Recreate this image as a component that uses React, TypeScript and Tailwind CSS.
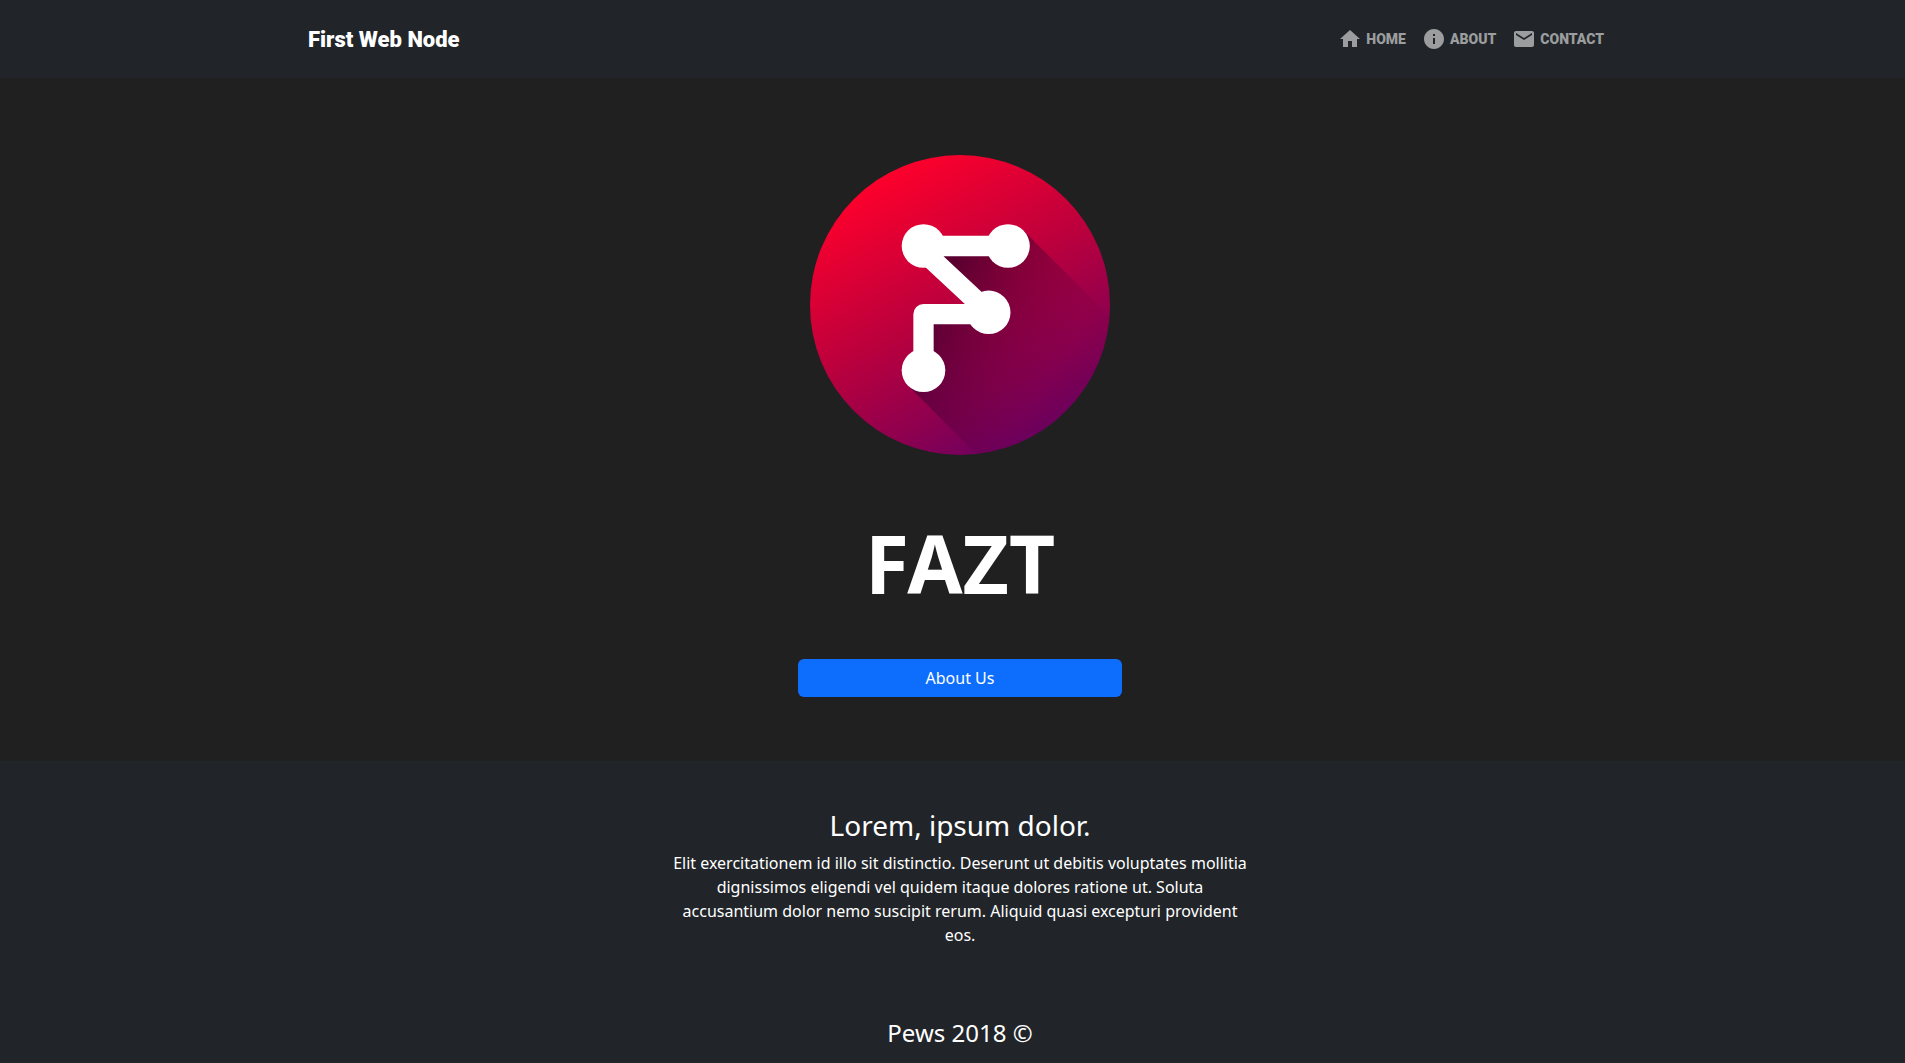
import { MdHome, MdInfo, MdEmail } from "react-icons/md";

const links = [
  { label: "HOME", Icon: MdHome },
  { label: "ABOUT", Icon: MdInfo },
  { label: "CONTACT", Icon: MdEmail },
];

function Logo() {
  return (
    <svg viewBox="0 0 300 300" className="w-full" role="img" aria-label="Fazt logo">
      <defs>
        <linearGradient id="disc" gradientUnits="userSpaceOnUse" x1="56" y1="26" x2="206" y2="292">
          <stop offset="0" stopColor="#ff002b" />
          <stop offset="0.5" stopColor="#b8003e" />
          <stop offset="0.8" stopColor="#8c0050" />
          <stop offset="1" stopColor="#6c0060" />
        </linearGradient>
        <linearGradient id="shade" gradientUnits="userSpaceOnUse" x1="125" y1="140" x2="245" y2="215">
          <stop offset="0" stopColor="#08002a" stopOpacity="0.58" />
          <stop offset="1" stopColor="#60003a" stopOpacity="0.1" />
        </linearGradient>
        <clipPath id="round">
          <circle cx="150" cy="150" r="150" />
        </clipPath>
      </defs>
      <g clipPath="url(#round)">
        <rect width="300" height="300" fill="url(#disc)" />
        <path
          d="M213.5 75.5 L198 91 H125 L179 157 L113.5 159 V215 L99 231.5 L199 332 L400 332 V262 Z"
          fill="url(#shade)"
        />
      </g>
      <g fill="none" stroke="#fff" strokeWidth="20.3" strokeLinejoin="round">
        <path d="M198 91 H113.5 V96.5 L178.7 157.3" />
        <path d="M178.7 159.2 H113.5 V215" />
      </g>
      <g fill="#fff">
        <circle cx="113.5" cy="91" r="21.8" />
        <circle cx="198" cy="91" r="21.8" />
        <circle cx="178.7" cy="157.3" r="21.8" />
        <circle cx="113.5" cy="215.3" r="21.8" />
      </g>
    </svg>
  );
}

export default function App() {
  return (
    <div className="min-h-screen bg-[#212529] font-['Noto_Sans',sans-serif] text-white">
      <header className="pl-[15px]">
        <nav className="mx-auto flex h-[78px] max-w-[1320px] items-center justify-between pl-2 pr-4 font-['Roboto',sans-serif] font-black">
          <a href="#" className="text-[22px]">
            First Web Node
          </a>
          <ul className="flex gap-4 text-sm text-[#9b9d9e]">
            {links.map(({ label, Icon }) => (
              <li key={label}>
                <a href="#" className="flex items-center gap-1">
                  <Icon className="size-6" />
                  {label}
                </a>
              </li>
            ))}
          </ul>
        </nav>
      </header>

      <main>
        <section className="bg-[#202020] pt-[77px] pb-16 pl-[15px]">
          <div className="mx-auto flex w-[324px] flex-col text-center">
            <div className="px-3">
              <Logo />
            </div>
            <h1 className="mt-[60px] text-[80px] leading-24 font-bold">FAZT</h1>
            <a href="#" className="mt-12 rounded-md bg-[#0d6efd] py-[7px] leading-6">
              About Us
            </a>
          </div>
        </section>

        <section className="pt-12 pl-[15px] text-center">
          <div className="mx-auto max-w-[600px] px-3">
            <h2 className="mb-2.5 text-[28px] leading-8">Lorem, ipsum dolor.</h2>
            <p>
              Elit exercitationem id illo sit distinctio. Deserunt ut debitis voluptates mollitia dignissimos eligendi
              vel quidem itaque dolores ratione ut. Soluta accusantium dolor nemo suscipit rerum. Aliquid quasi
              excepturi provident eos.
            </p>
          </div>
        </section>
      </main>

      <footer className="pt-[72px] pl-[15px] text-center text-2xl leading-7">Pews 2018 ©</footer>
    </div>
  );
}
